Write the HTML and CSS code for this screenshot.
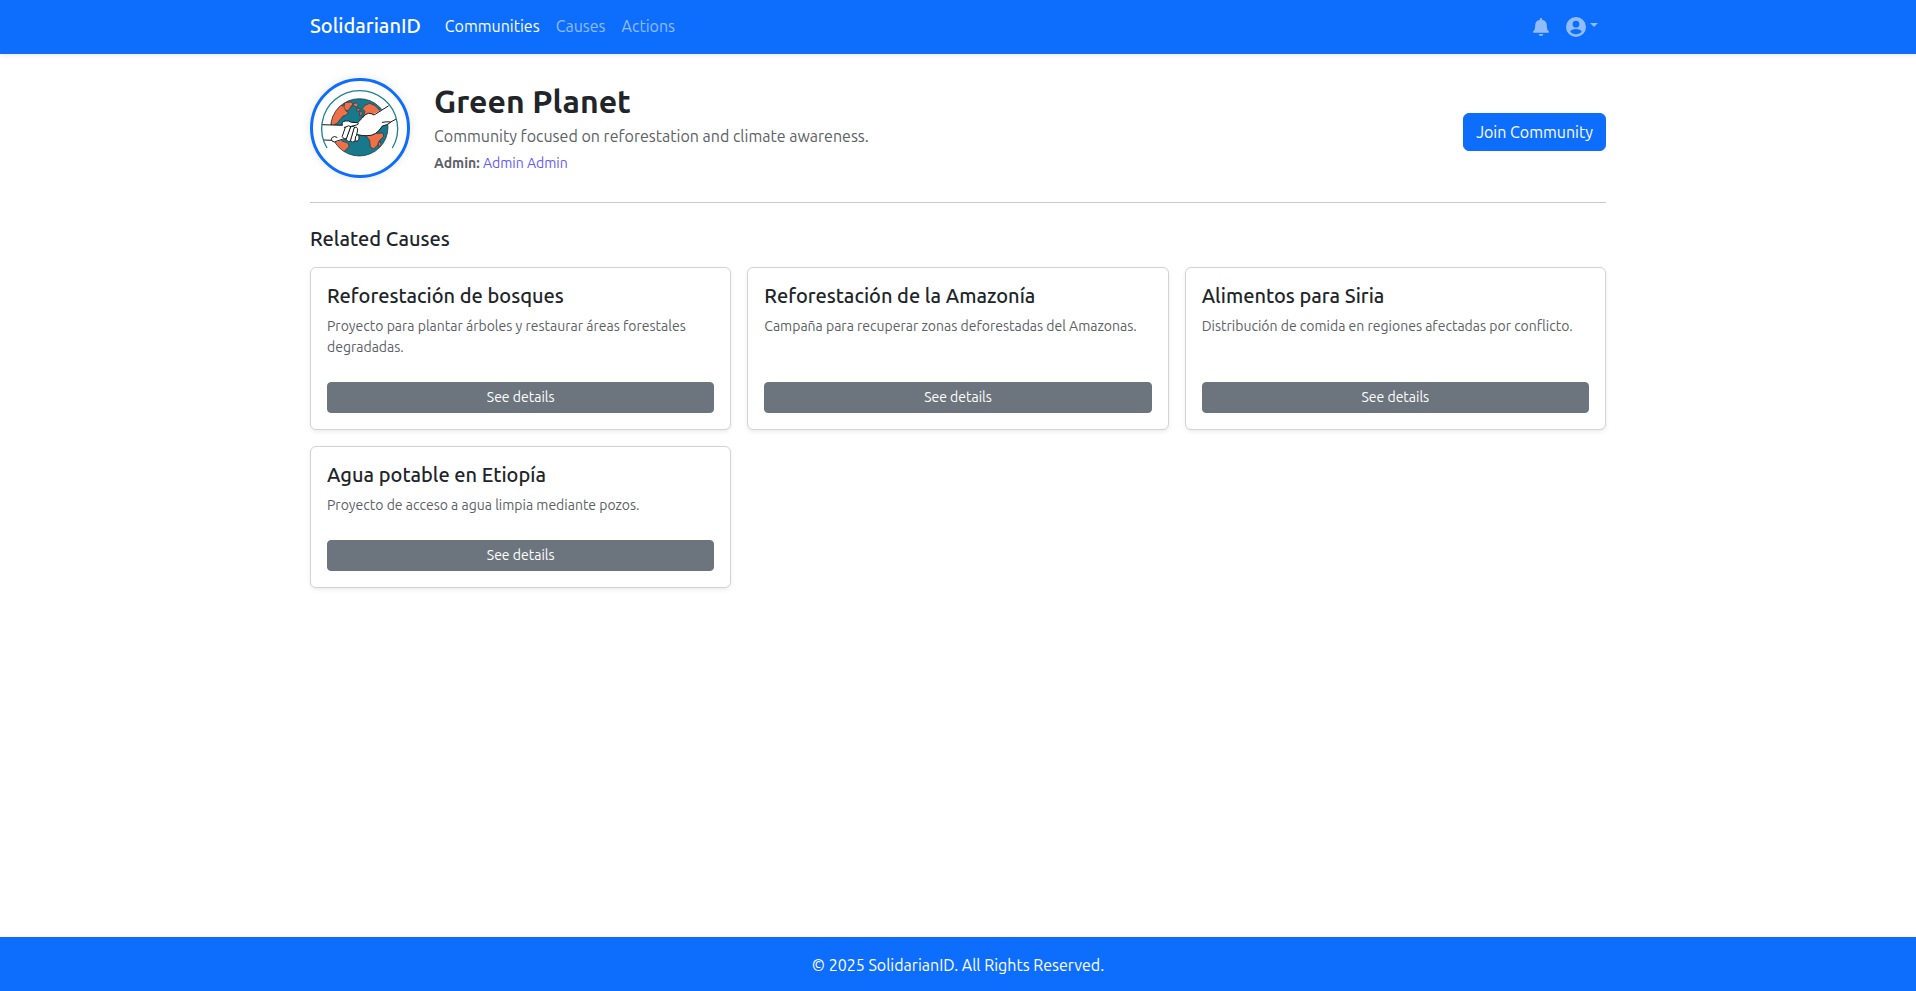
FILE: index.html
```html
<!DOCTYPE html>
<html lang="en">
<head>
<meta charset="utf-8">
<meta name="viewport" content="width=device-width, initial-scale=1">
<title>Green Planet - SolidarianID</title>
<link rel="stylesheet" href="styles.css">
</head>
<body>
<header class="navbar">
  <div class="container navbar-inner">
    <a class="brand" href="#">SolidarianID</a>
    <nav class="nav-links" aria-label="Main">
      <a class="nav-link active" href="#">Communities</a>
      <a class="nav-link" href="#">Causes</a>
      <a class="nav-link" href="#">Actions</a>
    </nav>
    <div class="nav-tools">
      <button class="icon-button" type="button" aria-label="Notifications">
        <svg class="bell" viewBox="0 0 16 18" aria-hidden="true"><path d="M8 0a1.1 1.1 0 0 1 1.1 1.1v.6c2.900.5 4.700 2.700 4.700 5.300 0 3.800.6 5.200 2 6.300.5.600.2 1.500-.5 1.500H.7c-.7 0-1-.9-.5-1.500C1.600 12.200 2.200 10.800 2.200 7c0-2.600 1.800-4.800 4.700-5.300v-.6A1.100 1.100 0 0 1 8 0zM5.800 16h4.400a2.200 2 0 0 1-4.400 0z"/></svg>
      </button>
      <button class="icon-button" type="button" aria-label="Account menu">
        <svg class="user" viewBox="0 0 20 20" aria-hidden="true"><path fill-rule="evenodd" d="M10 0a10 10 0 1 1 0 20a10 10 0 0 1 0-20zM10 3.800a3.400 3.400 0 1 0 0 6.800a3.400 3.400 0 0 0 0-6.800zM10 12c-2.900 0-5.300 1-5.700 2.500c1.200 1.700 3.300 2.700 5.700 2.700s4.500-1 5.700-2.700C15.300 13 12.900 12 10 12z"/></svg>
        <span class="caret"></span>
      </button>
    </div>
  </div>
</header>

<main class="container content">
  <section class="hero">
    <svg class="avatar" viewBox="24 27 282 282" role="img" aria-label="Green Planet logo">
      <clipPath id="globe"><circle cx="163" cy="166" r="86"/></clipPath>
      <circle cx="163" cy="166" r="86" fill="#18788c"/>
      <g clip-path="url(#globe)" fill="#ee7048" stroke="#26343a" stroke-width="2">
        <path d="M76 150l8-26 20-24 10 2 4-6 18-4 8 8-10 8-8-2-4 10 8 6-8 8-8 2-8 10-10 12-8 4-2 12z"/>
        <path d="M119 92l18-2 8 6-8 8-5 10-9 2-6-10z"/>
        <path d="M143 98l10-6 7 6-6 8zM157 108l9 3-4 7-7-2z"/>
        <path d="M180 100l14-6 18 8 16 18 14 20-24 4-10 10-10-8-8 4-14-6-8 4-4-8 12-8 4-14-8-8z"/>
        <path d="M166 118l6 2-2 10-7 0z"/>
        <path d="M80 190l24 14 26 10 2 10-14 14-6 12-22-20z"/>
        <path d="M184 193l24-8 26-2 2 10-14 14-4 12-12 12-10-6-2-20z"/>
        <path d="M220 214l6-6 2 10-6 6z"/>
      </g>
      <circle cx="163" cy="166" r="86" fill="none" stroke="#17282d" stroke-width="2"/>
      <g fill="#fff" stroke="#16191b" stroke-width="3" stroke-linejoin="round" stroke-linecap="round">
        <path d="M250 102L207 129L188 124L158 153L136 160L158 188L190 193L214 184L232 162L256 155L270 143L272 120L262 104z" stroke="none"/>
        <path d="M250 102L207 129Q198 123 190 124Q180 126 172 138L158 152"/>
        <path d="M272 142L257 150Q246 148 232 151M257 151Q247 160 232 162Q224 176 212 184Q200 192 186 191Q172 192 158 188" fill="none"/>
        <path d="M51 158L112 160L126 164L112 204L96 209L56 205z" stroke="none"/>
        <path d="M51 158L112 160Q109 149 121 147Q132 145 139 151L158 152Q164 156 154 159L135 164L118 166"/>
        <path d="M58 204L80 205" fill="none"/>
        <path d="M96 196Q88 191 82 196Q76 202 81 207Q88 213 96 207L112 202"/>
        <path d="M122 165Q132 158 138 164L126 200Q116 204 112 195z"/>
        <path d="M138 164Q146 160 150 167L139 205Q130 213 124 203z"/>
        <path d="M149 166Q158 164 158 174L151 207Q143 214 137 207z"/>
        <path d="M158 188Q164 192 162 202Q157 210 150 207L152 194"/>
      </g>
      <path d="M66 228A114 114 0 1 1 262 228" fill="none" stroke="#1f8091" stroke-width="4"/>
    </svg>
    <div class="hero-text">
      <h1>Green Planet</h1>
      <p class="description">Community focused on reforestation and climate awareness.</p>
      <p class="admin"><strong>Admin:</strong> <a href="#">Admin Admin</a></p>
    </div>
    <button class="join" type="button">Join Community</button>
  </section>

  <section class="causes" aria-labelledby="related">
    <h2 id="related">Related Causes</h2>
    <div class="grid">
      <article class="card">
        <h3>Reforestación de bosques</h3>
        <p>Proyecto para plantar árboles y restaurar áreas forestales degradadas.</p>
        <a class="details" href="#">See details</a>
      </article>
      <article class="card">
        <h3>Reforestación de la Amazonía</h3>
        <p>Campaña para recuperar zonas deforestadas del Amazonas.</p>
        <a class="details" href="#">See details</a>
      </article>
      <article class="card">
        <h3>Alimentos para Siria</h3>
        <p>Distribución de comida en regiones afectadas por conflicto.</p>
        <a class="details" href="#">See details</a>
      </article>
      <article class="card">
        <h3>Agua potable en Etiopía</h3>
        <p>Proyecto de acceso a agua limpia mediante pozos.</p>
        <a class="details" href="#">See details</a>
      </article>
    </div>
  </section>
</main>

<footer class="footer">© 2025 SolidarianID. All Rights Reserved.</footer>
</body>
</html>
```
FILE: styles.css
```css
* {
  box-sizing: border-box;
}

body {
  margin: 0;
  min-height: 100vh;
  display: flex;
  flex-direction: column;
  background: #fff;
  color: #212529;
  font-family: Ubuntu, "Open Sans", "Noto Sans", sans-serif;
  font-size: 16px;
  font-weight: 400;
  line-height: 24px;
}

h1,
h2,
h3,
p {
  margin: 0;
}

a {
  text-decoration: none;
}

button {
  font: inherit;
  cursor: pointer;
}

.container {
  width: 100%;
  max-width: 1320px;
  margin: 0 auto;
  padding: 0 12px;
}

.navbar {
  background: #0d6efd;
  box-shadow: 0 2px 4px rgba(0, 0, 0, 0.075);
}

.navbar-inner {
  display: flex;
  align-items: center;
  height: 54px;
}

.brand {
  margin-right: 24px;
  padding-bottom: 2px;
  color: #fff;
  font-size: 20px;
  font-weight: 500;
}

.nav-links {
  display: flex;
  gap: 16px;
  padding-bottom: 2px;
}

.nav-link {
  color: rgba(255, 255, 255, 0.55);
}

.nav-link.active {
  color: #fff;
}

.nav-tools {
  display: flex;
  gap: 17px;
  margin-left: auto;
  padding-right: 8px;
}

.icon-button {
  display: flex;
  align-items: center;
  gap: 4px;
  padding: 0;
  border: 0;
  background: none;
  color: rgba(255, 255, 255, 0.55);
}

.icon-button svg {
  fill: currentColor;
}

.bell {
  width: 16px;
  height: 18px;
}

.user {
  width: 20px;
  height: 20px;
}

.caret {
  margin-bottom: 4px;
  border: 4px solid transparent;
  border-top-color: currentColor;
  border-bottom: 0;
}

.content {
  flex: 1;
  padding-top: 24px;
  padding-bottom: 24px;
}

.hero {
  display: flex;
  align-items: center;
  gap: 24px;
  padding-bottom: 24px;
  border-bottom: 1px solid #c8c9ca;
}

.avatar {
  flex: none;
  width: 100px;
  height: 100px;
  border: 3px solid #0d6efd;
  border-radius: 50%;
  background: #fff;
  box-shadow: 0 0 10px rgba(0, 0, 0, 0.1);
}

h1 {
  margin-bottom: 4px;
  font-size: 32px;
  font-weight: 600;
  line-height: 38px;
}

.description {
  margin-bottom: 5px;
  color: #5c6166;
}

.admin {
  color: #5c6166;
  font-size: 14px;
  line-height: 21px;
}

.admin strong {
  font-weight: 600;
}

.admin a {
  color: #6159ff;
}

.join {
  margin-top: 8px;
  margin-left: auto;
  padding: 6px 12px;
  border: 1px solid #0d6efd;
  border-radius: 6px;
  background: #0d6efd;
  color: #fff;
}

h2 {
  margin: 24px 0 16px;
  font-size: 20px;
  font-weight: 500;
  line-height: 24px;
}

.grid {
  display: grid;
  grid-template-columns: repeat(auto-fill, minmax(340px, 1fr));
  gap: 16px;
}

.card {
  display: flex;
  flex-direction: column;
  padding: 16px;
  border: 1px solid #d3d3d4;
  border-radius: 6px;
  background: #fff;
  box-shadow: 0 2px 4px rgba(0, 0, 0, 0.075);
}

.card h3 {
  margin-bottom: 8px;
  font-size: 20px;
  font-weight: 500;
  line-height: 24px;
}

.card p {
  margin-bottom: 24px;
  color: #5c6166;
  font-size: 14px;
  line-height: 21px;
}

.details {
  margin-top: auto;
  padding: 4px 8px;
  border: 1px solid #6c757d;
  border-radius: 4px;
  background: #6c757d;
  color: #fff;
  font-size: 14px;
  line-height: 21px;
  text-align: center;
}

.footer {
  padding: 16px 12px 14px;
  background: #0d6efd;
  color: #fff;
  text-align: center;
}
```
